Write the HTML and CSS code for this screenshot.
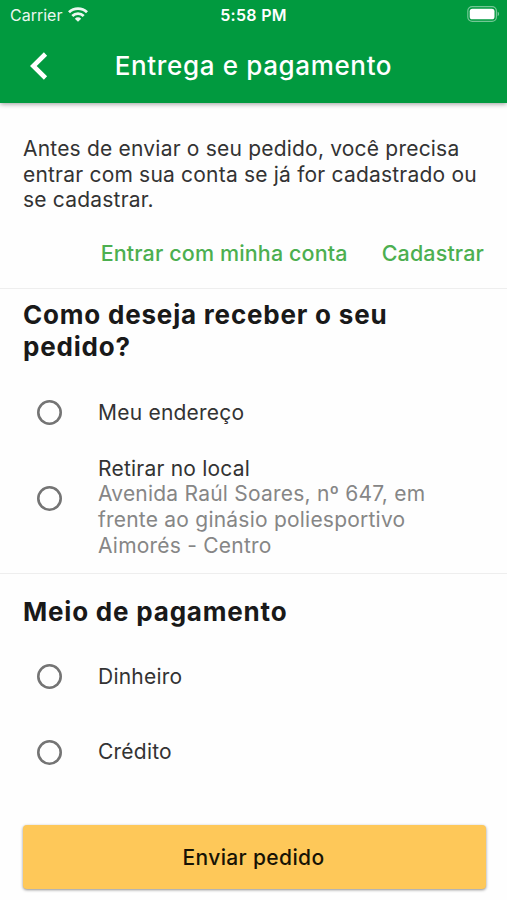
FILE: index.html
```html
<!DOCTYPE html>
<html lang="pt-BR">
<head>
<meta charset="utf-8">
<title>Entrega e pagamento</title>
<link rel="stylesheet" href="styles.css">
</head>
<body>
<div class="screen">
  <header class="top">
    <div class="status">
      <div class="carrier"><span class="carrier-name">Carrier</span>
        <svg class="wifi" width="20" height="15" viewBox="0 0 20 15" fill="none" stroke="#fff" stroke-width="2.8">
          <path d="M1 5.3a12.8 12.8 0 0 1 18 0"/>
          <path d="M4.3 8.9a8.1 8.1 0 0 1 11.4 0"/>
          <path d="M10 14.8 6.8 11.7a4.4 4.4 0 0 1 6.4 0z" fill="#fff" stroke="none"/>
        </svg>
      </div>
      <div class="time"><span>5:58 PM</span></div>
      <svg class="battery" width="33" height="16" viewBox="0 0 33 16">
        <rect x=".8" y=".6" width="28.6" height="14.8" rx="4.4" fill="none" stroke="#fff" stroke-opacity=".45" stroke-width="1.2"/>
        <rect x="2.7" y="2.7" width="24.8" height="10.6" rx="2.6" fill="#fff"/>
        <path d="M30.7 5.8c1.7.6 1.7 3.8 0 4.4z" fill="#fff" fill-opacity=".5"/>
      </svg>
    </div>
    <div class="bar">
      <svg class="back" width="20" height="28" viewBox="0 0 20 28" fill="none" stroke="#fff" stroke-width="4.6"><path d="M16.5 2 4.3 14l12.2 12"/></svg>
      <h1 class="title"><span>Entrega e pagamento</span></h1>
    </div>
  </header>
  <section class="login">
    <p class="intro"><span>Antes de enviar o seu pedido, você precisa</span><br><span>entrar com sua conta se já for cadastrado ou</span><br><span>se cadastrar.</span></p>
    <div class="actions"><a class="link">Entrar com minha conta</a><a class="link signup">Cadastrar</a></div>
  </section>
  <section class="delivery">
    <h2 class="heading">Como deseja receber o seu<br>pedido?</h2>
    <div class="option address"><i class="radio"></i><div class="label">Meu endereço</div></div>
    <div class="option pickup"><i class="radio"></i><div class="label">Retirar no local<div class="detail">Avenida Raúl Soares, nº 647, em<br>frente ao ginásio poliesportivo<br>Aimorés - Centro</div></div></div>
  </section>
  <section class="payment">
    <h2 class="heading">Meio de pagamento</h2>
    <div class="option cash"><i class="radio"></i><div class="label">Dinheiro</div></div>
    <div class="option credit"><i class="radio"></i><div class="label">Crédito</div></div>
  </section>
  <button class="submit">Enviar pedido</button>
</div>
</body>
</html>
```
FILE: styles.css
```css
* { box-sizing: border-box; }
body { margin: 0; background: #fefefe; font-family: Inter, sans-serif; color: #333; }
.screen { width: 507px; height: 900px; display: flex; flex-direction: column; overflow: hidden; }
.top { height: 103px; flex: none; background: #019a3f; color: #fff; box-shadow: 0 1px 5px rgba(0,0,0,.4); }
.status { height: 30px; display: grid; grid-template-columns: 1fr auto 1fr; align-items: center; padding: 0 7px 0 10px; }
.carrier { display: flex; align-items: center; gap: 6px; font-size: 16px; opacity: .92; }
.wifi { margin-top: -1px; }
.time { font-size: 16px; font-weight: 600; letter-spacing: .3px; margin-left: -3px; }
.battery { justify-self: end; margin-top: -2px; }
.bar { height: 71px; display: grid; grid-template-columns: 80px 1fr 80px; align-items: center; }
.back { margin-left: 28.5px; }
.title { margin: 0; text-align: center; font-size: 26px; font-weight: 500; letter-spacing: .64px; white-space: nowrap; line-height: 32px; }
.login { height: 186px; padding: 33px 23px 0; border-bottom: 1px solid #eee; white-space: nowrap; }
.intro { margin: 0; font-size: 21px; line-height: 25.7px; letter-spacing: .2px; }
.actions { display: flex; justify-content: flex-end; gap: 34px; margin-top: 26.5px; }
.link { color: #4caf50; font-size: 21.5px; font-weight: 500; line-height: 26px; letter-spacing: .13px; }
.delivery { height: 285px; padding: 10px 23px 0; border-bottom: 1px solid #eee; }
.heading { margin: 0; color: #191919; font-size: 26px; line-height: 32px; font-weight: 700; letter-spacing: .8px; white-space: nowrap; }
.option { display: flex; align-items: center; padding-left: 14px; gap: 36px; }
.radio { width: 25px; height: 25px; flex: none; box-shadow: inset 0 0 0 2.6px #747474; border-radius: 50%; }
.label { font-size: 21px; line-height: 25.7px; letter-spacing: .22px; white-space: nowrap; }
.detail { color: #868686; }
.address { margin-top: 37px; }
.pickup { margin-top: 30px; }
.pickup .radio { margin-top: -18px; }
.payment { padding: 22px 23px 0; }
.cash { margin-top: 36px; }
.credit { margin-top: 49.5px; }
.submit { margin: 60.5px 21px 0 23px; height: 64px; flex: none; border: 0; border-radius: 4px; background: #fec859; color: #171305; box-shadow: 0 1px 3px rgba(0,0,0,.45); font: 500 21px Inter, sans-serif; letter-spacing: .36px; padding: 0 2px 0 0; }
```
